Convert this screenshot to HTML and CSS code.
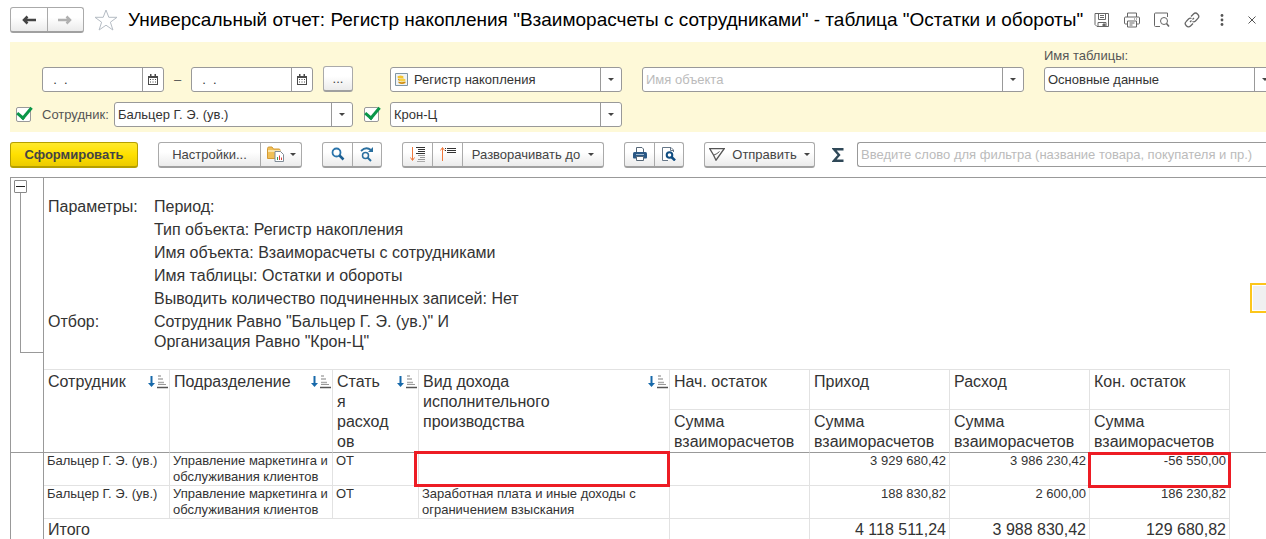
FILE: index.html
```html
<!DOCTYPE html>
<html lang="ru">
<head>
    <meta charset="UTF-8">
    <meta name="viewport" content="width=device-width, initial-scale=1.0">
    <title>Универсальный отчет</title>
    <link rel="stylesheet" href="styles.css">
</head>
<body>
    <svg width="0" height="0" class="defs">
        <symbol id="calendar" viewBox="0 0 10 11">
            <path d="M0 2h10v9H0z" fill="#4a4a4a"/>
            <path d="M2 0h1.500v2H2zM6.500 0H8v2H6.500z" fill="#4a4a4a"/>
            <path d="M1 4h8v6H1z" fill="#fff"/>
            <path d="M2 5.500h6M2 8h6" stroke="#4a4a4a" stroke-dasharray="1 1.500"/>
        </symbol>
        <symbol id="sort" viewBox="0 0 20 14">
            <path d="M3.500 1v8" stroke="#1769aa" stroke-width="2"/>
            <path d="M0 8h7l-3.500 4z" fill="#1769aa"/>
            <path d="M10 1h3M10 4h5M10 7.500h6" stroke="#aaa" stroke-width="1.500"/>
            <path d="M10 9.500h8" stroke="#999"/>
            <path d="M9 12.500h11" stroke="#555" stroke-width="1.500"/>
        </symbol>
        <symbol id="caret" viewBox="0 0 6 3">
            <path d="M0 0h6L3 3z" fill="#444"/>
        </symbol>
    </svg>

    <header class="titlebar">
        <div class="group nav">
            <button type="button" aria-label="Назад"><svg width="14" height="10" viewBox="0 0 14 10"><path d="M14 5H3M5.500 1.500L2 5l3.500 3.500" fill="none" stroke="#444" stroke-width="2.500"/></svg></button>
            <button type="button" aria-label="Вперед"><svg width="14" height="10" viewBox="0 0 14 10"><path d="M0 5h11M8.500 1.500L12 5 8.500 8.500" fill="none" stroke="#b0b0b0" stroke-width="2.500"/></svg></button>
        </div>
        <button type="button" class="plain star" aria-label="В избранное"><svg width="24" height="22" viewBox="0 0 24 22"><path d="M12 1l2.800 7.300H23l-6.600 4.900 2.500 7.800-6.900-4.800L5.100 21l2.500-7.800L1 8.300h8.200z" fill="none" stroke="#b5bcc4"/></svg></button>
        <h1>Универсальный отчет: Регистр накопления "Взаиморасчеты с сотрудниками" - таблица "Остатки и обороты"</h1>
        <div class="window-tools">
            <button type="button" class="plain" aria-label="Сохранить"><svg width="16" height="16" viewBox="0 0 16 16" fill="none" stroke="#666"><path d="M1 1.500h13.500v13H3L1 12.500zM4.500 1.500v6h7v-6M6 3.500h4M6 5.500h4"/><path d="M4 14.500v-4h8v4"/><path d="M9 12h2v2H9z" fill="#666"/></svg></button>
            <button type="button" class="plain" aria-label="Печать"><svg width="16" height="16" viewBox="0 0 16 16" fill="none" stroke="#666"><path d="M3.500 5V1h9v4M3.500 12H1.500Q.5 12 .5 11V6q0-1 1-1h13q1 0 1 1v5q0 1-1 1h-2"/><path d="M3.500 9h9v6h-9zM5.500 11h5M5.500 13h3M10 7h1M12 7h1"/></svg></button>
            <button type="button" class="plain" aria-label="Просмотр"><svg width="16" height="16" viewBox="0 0 16 16" fill="none" stroke="#666"><path d="M6 14.500H1.500Q.5 14.500.5 13.500V2q0-1 1-1h12V5"/><circle cx="10" cy="9" r="3.500"/><path d="M12.500 11.500l2.500 3" stroke-width="1.500"/></svg></button>
            <button type="button" class="plain" aria-label="Ссылка"><svg width="16" height="16" viewBox="0 0 16 16" fill="none" stroke="#666" stroke-width="1.300"><path d="M7 4.500l2.500-2.500q2-2 4.200.200t.2 4.200L11.500 9q-1.500 1.300-3 .5"/><path d="M9 11.500L6.500 14q-2 2-4.200-.200t-.2-4.200L4.500 7q1.500-1.300 3-.5"/><path d="M6 10l1.500-1.500M8.500 7.500L10 6"/></svg></button>
            <button type="button" class="plain" aria-label="Еще"><svg width="16" height="16" viewBox="0 0 16 16" fill="#555"><circle cx="8" cy="3.500" r="1.400"/><circle cx="8" cy="8" r="1.400"/><circle cx="8" cy="12.500" r="1.400"/></svg></button>
            <button type="button" class="plain" aria-label="Закрыть"><svg width="16" height="16" viewBox="0 0 16 16" stroke="#555"><path d="M4.500 4.500l7 7M11.500 4.500l-7 7"/></svg></button>
        </div>
    </header>

    <section class="filters">
        <div class="filter-row">
            <div class="field date">
                <input type="text" value="  .  ." aria-label="Начало периода">
                <button type="button" aria-label="Выбрать дату"><svg width="10" height="11"><use href="#calendar"/></svg></button>
            </div>
            <span class="dash">–</span>
            <div class="field date">
                <input type="text" value="  .  ." aria-label="Конец периода">
                <button type="button" aria-label="Выбрать дату"><svg width="10" height="11"><use href="#calendar"/></svg></button>
            </div>
            <button type="button" class="btn period">...</button>
            <div class="field object-type">
                <svg class="coins" width="13" height="13" viewBox="0 0 13 13"><path d="M.5.5h12v12H.5z" fill="#eef3f6" stroke="#7f95a5"/><ellipse cx="5.500" cy="4" rx="3" ry="1.500" fill="#f4c430"/><path d="M3 5.500q2 2 5.500 0v1.500q-3 2-5.500 0z" fill="#d99a10"/><ellipse cx="7.500" cy="7" rx="3" ry="1.500" fill="#f7cf45"/><path d="M3.500 8.500q3 1.500 7 0V10q-3.500 2-7 0z" fill="#d28d0c"/></svg>
                <select aria-label="Тип объекта"><option>Регистр накопления</option></select>
                <span class="arrow"><svg width="6" height="3"><use href="#caret"/></svg></span>
            </div>
            <div class="field object-name">
                <select class="empty" aria-label="Имя объекта"><option>Имя объекта</option></select>
                <span class="arrow"><svg width="6" height="3"><use href="#caret"/></svg></span>
            </div>
            <div class="labelled">
                <label for="tableName">Имя таблицы:</label>
                <div class="field">
                    <select id="tableName"><option>Основные данные</option></select>
                    <span class="arrow"><svg width="6" height="3"><use href="#caret"/></svg></span>
                </div>
            </div>
        </div>
        <div class="filter-row second">
            <input type="checkbox" class="check" checked aria-label="Отбор по сотруднику">
            <label for="employee" class="employee-label">Сотрудник:</label>
            <div class="field employee">
                <select id="employee"><option>Бальцер Г. Э. (ув.)</option></select>
                <span class="arrow"><svg width="6" height="3"><use href="#caret"/></svg></span>
            </div>
            <input type="checkbox" class="check" checked aria-label="Отбор по организации">
            <div class="field company">
                <select aria-label="Организация"><option>Крон-Ц</option></select>
                <span class="arrow"><svg width="6" height="3"><use href="#caret"/></svg></span>
            </div>
        </div>
    </section>

    <div class="toolbar">
        <button type="button" class="btn primary">Сформировать</button>
        <div class="group">
            <button type="button" class="settings">Настройки...</button>
            <button type="button" class="variants" aria-label="Варианты"><svg width="17" height="16" viewBox="0 0 17 16"><path d="M.5 12.500v-10Q.5 1 2 1h3l1.500 2H12q1 0 1 1v8.500z" fill="#f1c057" stroke="#d39a35"/><path d="M1 5h12" stroke="#fae3a8" stroke-width="2"/><path d="M8 5.500h5.500l3 3v7H8z" fill="#fff" stroke="#7f8b96"/><path d="M10.500 14v-3" stroke="#2f9e5a"/><path d="M12.500 14V9.500" stroke="#d9443a"/><path d="M14.500 14v-2.500" stroke="#d9443a"/></svg><svg width="6" height="3"><use href="#caret"/></svg></button>
        </div>
        <div class="group">
            <button type="button" class="square" aria-label="Найти"><svg width="14" height="14" viewBox="0 0 14 14"><circle cx="5.500" cy="5.500" r="4" fill="none" stroke="#2a74ab" stroke-width="1.800"/><path d="M8.500 8.500l4 4" stroke="#1d5f92" stroke-width="2.500"/></svg></button>
            <button type="button" class="square" aria-label="Найти далее"><svg width="14" height="15" viewBox="0 0 14 15" fill="none" stroke="#2a6f9f"><path d="M1 4q5-5 10-1" stroke-width="1.800"/><path d="M13 0v5H8z" fill="#2a6f9f" stroke="none"/><circle cx="5.500" cy="8.500" r="3" stroke-width="1.500"/><path d="M7.500 10.500l3.500 3.500" stroke-width="2"/></svg></button>
        </div>
        <div class="group">
            <button type="button" class="square" aria-label="Развернуть"><svg width="16" height="16" viewBox="0 0 16 16"><path d="M2.500 1v13M.5 11.500l2 3 2-3" fill="none" stroke="#f0783c"/><path d="M6 1.500h9M8 3.500h7M8 5.500h7" stroke="#333"/><path d="M6 7.500h9" stroke="#333"/><path d="M8 9.500h7M10 11.500h5M8 13.500h7" stroke="#999"/><path d="M7 15.500h8" stroke="#aaa"/></svg></button>
            <button type="button" class="square" aria-label="Свернуть"><svg width="16" height="16" viewBox="0 0 16 16"><path d="M2.500 15V2M.5 4.500l2-3 2 3" fill="none" stroke="#f0783c"/><path d="M5 2.500h1M7 2.500h9M5 4.500h1M7 4.500h9M7 6.500h9" stroke="#333"/></svg></button>
            <button type="button" class="expand">Разворачивать до <svg width="6" height="3"><use href="#caret"/></svg></button>
        </div>
        <div class="group">
            <button type="button" class="square" aria-label="Печать"><svg width="14" height="14" viewBox="0 0 14 14"><path d="M3.500 5V.5H9L10.500 2v3" fill="#fff" stroke="#567"/><path d="M1.500 5h11q1.500 0 1.500 1.500v4q0 1-1 1H1q-1 0-1-1v-4Q0 5 1.500 5z" fill="#2a5885"/><path d="M3 7.500h8" stroke="#9fb8cf"/><path d="M3.500 9.500h7v4h-7z" fill="#fff" stroke="#567"/></svg></button>
            <button type="button" class="square" aria-label="Предварительный просмотр"><svg width="14" height="14" viewBox="0 0 14 14"><path d="M11.500 5V3L9 .5H.5v13H6" fill="#fff" stroke="#678"/><path d="M8.500.5V3.500h3" fill="none" stroke="#678"/><circle cx="7.500" cy="8" r="2.800" fill="#fff" stroke="#0f4c81" stroke-width="2"/><path d="M9.500 10l3.500 3.500" stroke="#0f4c81" stroke-width="2.500"/></svg></button>
        </div>
        <button type="button" class="btn send"><svg width="16" height="13" viewBox="0 0 16 13" fill="none" stroke="#555"><path d="M.7.700h14.500L7 12.200 4.500 7z" stroke-width="1.300"/><path d="M5 7q3-1 5.500-3.500"/></svg>Отправить<svg width="6" height="3"><use href="#caret"/></svg></button>
        <button type="button" class="plain sigma" aria-label="Сумма"><svg width="12" height="14" viewBox="0 0 12 14"><path d="M11.500 1.200H2L7 7l-5 5.800h9.500" fill="none" stroke="#2f4858" stroke-width="2.400"/></svg></button>
        <input type="text" class="search" placeholder="Введите слово для фильтра (название товара, покупателя и пр.)" aria-label="Фильтр">
    </div>

    <main class="report">
        <div class="gutter">
            <button type="button" class="plain collapse" aria-label="Свернуть группу"></button>
            <div class="bracket"></div>
        </div>
        <div class="sheet">
            <dl class="params">
                <dt>Параметры:</dt>
                <dd>Период:</dd>
                <dd>Тип объекта: Регистр накопления</dd>
                <dd>Имя объекта: Взаиморасчеты с сотрудниками</dd>
                <dd>Имя таблицы: Остатки и обороты</dd>
                <dd>Выводить количество подчиненных записей: Нет</dd>
                <dt>Отбор:</dt>
                <dd>Сотрудник Равно "Бальцер Г. Э. (ув.)" И<br>Организация Равно "Крон-Ц"</dd>
            </dl>
            <table>
                <colgroup>
                    <col class="c-employee"><col class="c-unit"><col class="c-item"><col class="c-income">
                    <col class="c-sum"><col class="c-sum"><col class="c-sum"><col class="c-sum"><col>
                </colgroup>
                <thead>
                    <tr class="head-top">
                        <th rowspan="2"><div class="sortable">Сотрудник<svg width="20" height="14"><use href="#sort"/></svg></div></th>
                        <th rowspan="2"><div class="sortable">Подразделение<svg width="20" height="14"><use href="#sort"/></svg></div></th>
                        <th rowspan="2"><div class="sortable"><span>Стать<br>я<br>расход<br>ов</span><svg width="20" height="14"><use href="#sort"/></svg></div></th>
                        <th rowspan="2"><div class="sortable"><span>Вид дохода<br>исполнительного<br>производства</span><svg width="20" height="14"><use href="#sort"/></svg></div></th>
                        <th>Нач. остаток</th>
                        <th>Приход</th>
                        <th>Расход</th>
                        <th>Кон. остаток</th>
                        <td class="blank" rowspan="2"></td>
                    </tr>
                    <tr class="head-bottom">
                        <th>Сумма взаиморасчетов</th>
                        <th>Сумма взаиморасчетов</th>
                        <th>Сумма взаиморасчетов</th>
                        <th>Сумма взаиморасчетов</th>
                    </tr>
                </thead>
                <tbody>
                    <tr>
                        <td>Бальцер Г. Э. (ув.)</td>
                        <td>Управление маркетинга и обслуживания клиентов</td>
                        <td>ОТ</td>
                        <td class="marked"><div class="mark mark-income"></div></td>
                        <td class="num"></td>
                        <td class="num">3 929 680,42</td>
                        <td class="num">3 986 230,42</td>
                        <td class="num marked">-56 550,00<div class="mark mark-balance"></div></td>
                        <td class="blank"></td>
                    </tr>
                    <tr>
                        <td>Бальцер Г. Э. (ув.)</td>
                        <td>Управление маркетинга и обслуживания клиентов</td>
                        <td>ОТ</td>
                        <td>Заработная плата и иные доходы с ограничением взыскания</td>
                        <td class="num"></td>
                        <td class="num">188 830,82</td>
                        <td class="num">2 600,00</td>
                        <td class="num">186 230,82</td>
                        <td class="blank"></td>
                    </tr>
                </tbody>
                <tfoot>
                    <tr>
                        <td colspan="4">Итого</td>
                        <td class="num"></td>
                        <td class="num">4 118 511,24</td>
                        <td class="num">3 988 830,42</td>
                        <td class="num">129 680,82</td>
                        <td class="blank"></td>
                    </tr>
                </tfoot>
            </table>
            <div class="cell-cursor"></div>
        </div>
    </main>
</body>
</html>
```
FILE: styles.css
```css
* {
    box-sizing: border-box;
}
body {
    margin: 0;
    height: 100vh;
    display: flex;
    flex-direction: column;
    overflow: hidden;
    background: #fff;
    color: #333;
    font-family: "Liberation Sans", Arial, sans-serif;
    font-size: 13px;
}
.defs {
    position: absolute;
}
svg {
    display: block;
    flex: none;
}
button, input, select {
    font: inherit;
    color: inherit;
    margin: 0;
    padding: 0;
}

/* buttons */
.btn, .group {
    display: flex;
    align-items: center;
    justify-content: center;
    flex: none;
    height: 26px;
    border: 1px solid #aaa;
    border-bottom: 2px solid #a0a0a0;
    border-radius: 3px;
    background: linear-gradient(#fff 40%, #ebebeb);
    color: #444;
}
.group button {
    display: flex;
    align-items: center;
    justify-content: center;
    height: 100%;
    border: 0;
    background: none;
}
.group button + button {
    border-left: 1px solid #aaa;
}
.group .square {
    width: 30px;
}
.group .square:first-child, .group .square:last-child {
    width: 29px;
}
.plain {
    display: flex;
    align-items: center;
    justify-content: center;
    border: 0;
    background: none;
}

/* title */
.titlebar {
    display: flex;
    align-items: center;
    flex: none;
    height: 42px;
    padding: 0 6px 2px 10px;
}
.nav {
    width: 74px;
}
.nav button {
    flex: 1;
}
.star {
    margin: 0 10px;
}
h1 {
    margin: 0;
    flex: 1;
    min-width: 0;
    color: #000;
    font-size: 19px;
    font-weight: normal;
    white-space: nowrap;
}
.window-tools {
    display: flex;
    gap: 14px;
}

/* filters */
.filters {
    flex: none;
    margin-left: 10px;
    padding: 5px 0;
    overflow: hidden;
    background: #fef9d8;
    color: #555;
}
.filter-row {
    display: flex;
    align-items: flex-end;
    margin-right: -10px;
    padding-left: 32px;
}
.second {
    align-items: center;
    margin-top: 10px;
    padding-left: 6px;
}
.field {
    display: flex;
    align-items: center;
    flex: none;
    height: 25px;
    border: 1px solid #999;
    border-radius: 3px;
    background: #fff;
    color: #333;
}
.field input, .field select {
    flex: 1;
    min-width: 0;
    height: 100%;
    padding-left: 3px;
    border: 0;
    background: none;
    appearance: none;
    outline: none;
}
.field .empty {
    color: #bbb;
}
.field button, .arrow {
    display: flex;
    align-items: center;
    justify-content: center;
    width: 21px;
    height: 100%;
    border: 0;
    border-left: 1px solid #999;
    background: none;
}
.date {
    width: 122px;
}
.dash {
    width: 27px;
    line-height: 25px;
    text-align: center;
}
.period {
    width: 30px;
    margin-left: 10px;
}
.object-type {
    width: 232px;
    margin-left: 37px;
    padding-left: 4px;
}
.object-type select {
    padding-left: 6px;
}
.object-name {
    flex: 1;
    margin: 0 20px;
}
.labelled {
    width: 232px;
}
.labelled label {
    display: block;
    margin-bottom: 3px;
    line-height: 17px;
}
.check {
    display: grid;
    place-items: center;
    flex: none;
    width: 15px;
    height: 15px;
    border: 1px solid #999;
    border-radius: 2px;
    background: #fff;
    appearance: none;
}
.check:checked::before {
    content: "";
    width: 6px;
    height: 12px;
    margin: -6px 0 0 2px;
    border: solid #0a9648;
    border-width: 0 3px 3px 0;
    transform: rotate(40deg);
}
.employee-label {
    width: 72px;
    margin-left: 11px;
}
.employee {
    width: 239px;
    margin-right: 11px;
}
.company {
    width: 232px;
    margin-left: 11px;
}

/* toolbar */
.toolbar {
    display: flex;
    align-items: center;
    flex: none;
    gap: 20px;
    height: 45px;
    padding-left: 10px;
}
.primary {
    width: 128px;
    border-color: #b59f00;
    background: linear-gradient(#ffe92e, #ffe000 50%, #eccb00);
    font-weight: bold;
}
.settings {
    width: 101px;
}
.variants {
    width: 41px;
    gap: 6px;
}
.expand {
    width: 141px;
    gap: 8px;
}
.send {
    width: 111px;
    gap: 7px;
}
.sigma {
    margin: 0 -7px 0 -3px;
}
.search {
    flex: 1;
    min-width: 0;
    height: 25px;
    padding-left: 3px;
    border: 1px solid #999;
    border-right: 0;
    border-radius: 3px 0 0 3px;
}
.search::placeholder {
    color: #bbb;
}

/* report */
.report {
    display: flex;
    flex: 1;
    min-height: 0;
    margin-left: 10px;
    border-top: 1px solid #999;
    border-left: 1px solid #999;
    font-size: 16px;
    line-height: 20px;
}
.gutter {
    flex: none;
    width: 32px;
    padding-top: 2px;
}
.collapse {
    width: 13px;
    height: 13px;
    margin-left: 3px;
    border: 1px solid #888;
    border-radius: 1px;
}
.collapse::before {
    content: "";
    width: 9px;
    height: 1px;
    background: #222;
}
.bracket {
    height: 160px;
    margin-left: 9px;
    border: solid #999;
    border-width: 0 0 1px 1px;
}
.gutter::after {
    content: "";
    display: block;
    height: 99px;
    border-bottom: 1px solid #999;
}
.sheet {
    position: relative;
    flex: 1;
    min-width: 0;
    border-left: 1px solid #999;
}
.params {
    display: grid;
    grid-template-columns: 106px 1fr;
    row-gap: 3px;
    margin: 0;
    padding: 19px 0 17px 4px;
}
.params dt {
    grid-column: 1;
}
.params dd {
    grid-column: 2;
    margin: 0;
}
table {
    width: 100%;
    table-layout: fixed;
    border-collapse: separate;
    border-spacing: 0;
}
.c-employee {
    width: 126px;
}
.c-unit {
    width: 163px;
}
.c-item {
    width: 86px;
}
.c-income {
    width: 251px;
}
.c-sum {
    width: 140px;
}
th, td {
    padding: 0 0 0 4px;
    border: solid #e2e2e2;
    border-width: 0 1px 1px 0;
    font-weight: normal;
    text-align: left;
    vertical-align: top;
}
th {
    padding-top: 2px;
}
.head-top th {
    height: 41px;
    border-top-width: 1px;
}
.head-bottom th {
    height: 43px;
}
.head-top th[rowspan], .head-bottom th, thead .blank {
    border-bottom-color: #999;
}
.sortable {
    display: flex;
    justify-content: space-between;
}
.sortable svg {
    margin: 3px 1px 0 0;
}
tbody td {
    height: 33px;
    padding: 0 0 0 3px;
    font-size: 13px;
    line-height: 16px;
}
tfoot td {
    padding-top: 1px;
}
.num {
    padding-right: 3px;
    text-align: right;
}
.blank {
    border-width: 0;
}
thead .blank {
    border-bottom-width: 1px;
}

/* marks over the cells */
.marked {
    position: relative;
}
.mark {
    position: absolute;
    border: 3px solid #ed1c24;
}
.mark-income {
    inset: -2px -1px -2px -5px;
}
.mark-balance {
    inset: -1px -2px -3px -2px;
}
.cell-cursor {
    position: absolute;
    top: 105px;
    right: -14px;
    width: 30px;
    height: 30px;
    border: 2px solid #fcc61b;
    background: #f0f0f0;
    box-shadow: inset 0 0 0 1px #fff;
}
```
